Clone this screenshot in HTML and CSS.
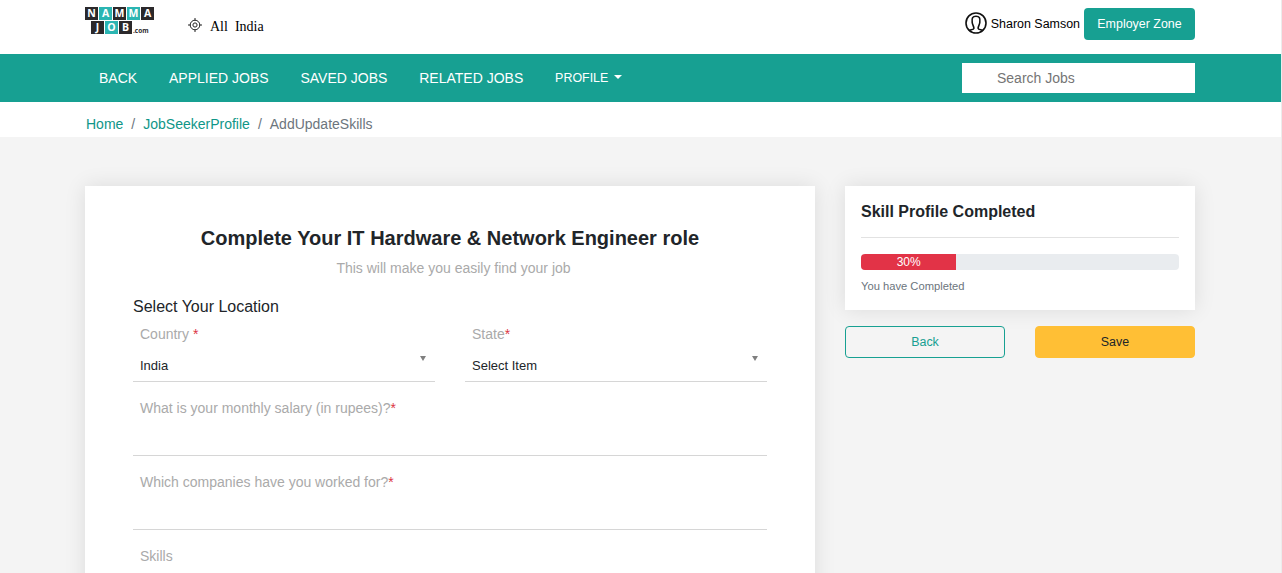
FILE: index.html
```html
<!DOCTYPE html>
<html lang="en">
<head>
<meta charset="utf-8">
<title>Namma Job</title>
<link rel="stylesheet" href="styles.css">
</head>
<body>
<header class="top">
  <div class="container top-row">
    <a class="logo" aria-label="Namma Job">
      <span class="logo-row"><b class="tile">N</b><b class="tile teal">A</b><b class="tile">M</b><b class="tile teal">M</b><b class="tile">A</b></span>
      <span class="logo-row second"><b class="tile">J</b><b class="tile teal">O</b><b class="tile">B</b><b class="com">.com</b></span>
    </a>
    <div class="location">
      <svg width="14" height="14" viewBox="0 0 14 14" fill="none" stroke="#222"><circle cx="7" cy="7" r="4.8"/><circle cx="7" cy="7" r="2.1"/><path d="M7 0v2.4M7 11.6V14M0 7h2.4M11.6 7H14"/></svg>
      <span class="place">All  India</span>
    </div>
    <div class="account">
      <svg width="22" height="22" viewBox="0 0 22 22" fill="none" stroke="#111" stroke-width="1.6"><circle cx="11" cy="11" r="10"/><path d="M4 18.600C5 17.600 8.700 17.900 8.900 16.300 9 14.500 7.500 13 7.200 10.500 6.600 6 7.600 4.200 11 4.200s4.400 1.800 3.800 6.300c-.3 2.500-1.800 4-1.700 5.800.2 1.600 3.900 1.300 4.900 2.300"/></svg>
      <span class="user">Sharon Samson</span>
      <a class="employer">Employer Zone</a>
    </div>
  </div>
</header>
<nav class="nav">
  <div class="container nav-row">
    <a>BACK</a><a>APPLIED JOBS</a><a>SAVED JOBS</a><a>RELATED JOBS</a>
    <a class="profile">PROFILE<i class="caret"></i></a>
    <input class="search" type="text" placeholder="Search Jobs">
  </div>
</nav>
<div class="crumbs">
  <div class="container crumb-row"><a>Home</a><span>/</span><a>JobSeekerProfile</a><span>/</span><span>AddUpdateSkills</span></div>
</div>
<main class="container main">
  <section class="card form">
    <h1>Complete Your IT Hardware &amp; Network Engineer role</h1>
    <p class="sub">This will make you easily find your job</p>
    <h2>Select Your Location</h2>
    <div class="pair">
      <div class="field"><label>Country <em>*</em></label><div class="value">India<i class="arrow"></i></div></div>
      <div class="field"><label>State<em>*</em></label><div class="value">Select Item<i class="arrow"></i></div></div>
    </div>
    <div class="field"><label>What is your monthly salary (in rupees)?<em>*</em></label><div class="value"></div></div>
    <div class="field"><label>Which companies have you worked for?<em>*</em></label><div class="value"></div></div>
    <div class="field"><label>Skills</label></div>
  </section>
  <aside>
    <div class="card status">
      <h3>Skill Profile Completed</h3>
      <div class="progress"><div class="bar" style="width:30%">30%</div></div>
      <p class="note">You have Completed</p>
    </div>
    <div class="actions"><a class="btn outline">Back</a><a class="btn save">Save</a></div>
  </aside>
</main>
</body>
</html>
```
FILE: styles.css
```css
* { box-sizing: border-box; }
html { background: #f4f4f4; height: 100%; overflow: hidden; }
body {
  display: flex;
  flex-direction: column;
  margin: 0;
  height: 100%;
  overflow: hidden;
  border-right: 1px solid #ececec;
  background: #f4f4f4;
  color: #212529;
  font: 14px/21px "Liberation Sans", Arial, sans-serif;
}
h1, h2, h3, p { margin: 0; }
svg { display: block; flex: none; }
.container { width: 1110px; margin-left: 85px; }

.top { flex: none; height: 54px; background: #fff; }
.top-row { display: flex; align-items: flex-start; }
.logo { display: flex; flex-direction: column; gap: 1px; width: 70px; padding-top: 7px; }
.logo-row { display: flex; gap: 1px; }
.second { padding-left: 6px; }
.tile {
  width: 13px;
  height: 13px;
  flex: none;
  background: #2b292b;
  color: #fff;
  font: 700 10.500px/13px "Open Sans", sans-serif;
  text-align: center;
}
.teal { background: #2bb5b2; }
.com { align-self: flex-end; color: #2b292b; font: 700 6.500px/7px "Open Sans", sans-serif; }
.location { display: flex; padding: 18px 0 0 33px; gap: 8px; }
.place { margin-top: -2px; color: #000; font-family: "Liberation Serif", serif; white-space: pre; }
.account { display: flex; margin-left: auto; padding-top: 8px; color: #000; font-size: 12.450px; }
.account svg { margin-top: 4px; }
.user { margin: 6px 4px 0 3.800px; }
.employer {
  width: 111px;
  height: 32px;
  border-radius: 4px;
  background: #17a092;
  color: #fff;
  line-height: 32px;
  text-align: center;
}

.nav { flex: none; height: 48px; background: #17a092; }
.nav-row { display: flex; align-items: center; height: 48px; padding-left: 14px; gap: 31.890px; color: #fff; }
.profile { display: flex; align-items: center; font-size: 12.450px; }
.caret {
  margin: -2px 0 0 6px;
  border: solid transparent;
  border-width: 4px 4px 0;
  border-top-color: #fff;
}
.search {
  width: 233px;
  height: 30px;
  margin-left: auto;
  padding: 0 0 0 35px;
  border: 0;
  background: #fff;
  font: 14px "Liberation Sans", Arial, sans-serif;
}
.search::placeholder { color: #757575; }

.crumbs { flex: none; height: 35px; background: #fff; }
.crumb-row { display: flex; gap: 8px; padding: 12px 0 0 1px; color: #6c757d; }
.crumb-row a { color: #0f9688; }

.main { display: grid; grid-template-columns: 730px 350px; gap: 30px; align-items: start; padding-top: 49px; }
.card { background: #fff; box-shadow: 0 0 20px rgba(0, 0, 0, .1); }
.form { padding: 40px 48px 0; }
.form h1 { font-size: 20px; line-height: 24px; text-align: center; }
.sub { padding: 8px 0 0 7px; color: #aaa; text-align: center; }
.form h2 { margin: 18px 0 8px; font-size: 16px; font-weight: 400; line-height: 19px; }
.pair { display: grid; grid-template-columns: 1fr 1fr; gap: 30px; }
.field { height: 74px; }
.field label { display: block; padding: 0 7px; color: #aaa; }
.field em { color: #dc3545; font-style: normal; }
.value {
  display: flex;
  justify-content: space-between;
  height: 37px;
  padding: 10px 9px 0 7px;
  border-bottom: 1px solid #d6d6d6;
  font-size: 13px;
}
.arrow {
  height: 0;
  margin-top: 1px;
  border: solid transparent;
  border-width: 5px 3.500px 0;
  border-top-color: #808080;
}

.status { height: 124px; padding: 16px; }
.status h3 { padding-bottom: 16px; border-bottom: 1px solid #e2e2e2; font-size: 16px; line-height: 19px; }
.progress { height: 16px; margin-top: 16px; overflow: hidden; border-radius: 4px; background: #e9ecef; }
.bar { height: 16px; background: #e23347; color: #fff; font-size: 12px; line-height: 16px; text-align: center; }
.note { margin-top: 6px; color: #6c757d; font-size: 11.200px; }
.actions { display: grid; grid-template-columns: 1fr 1fr; gap: 30px; margin-top: 16px; }
.btn { height: 32px; border: 1px solid #17a092; border-radius: 4px; font-size: 12.450px; line-height: 30px; text-align: center; }
.outline { color: #17a092; }
.save { border-color: #ffbf35; background: #ffbf35; }
```
